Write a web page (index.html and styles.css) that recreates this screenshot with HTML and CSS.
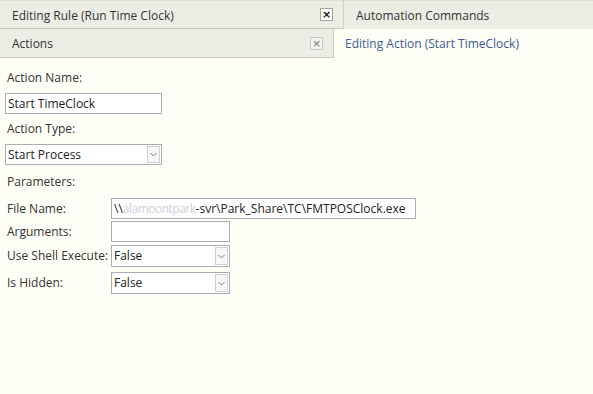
FILE: index.html
```html
<!DOCTYPE html>
<html>
<head>
<meta charset="utf-8">
<link rel="stylesheet" href="styles.css">
</head>
<body>
<div class="tabs-row1">
  <div class="tab tab-rule">
    <span class="tab-title">Editing Rule (Run Time Clock)</span>
    <span class="close close-dark">×</span>
  </div>
  <div class="tab tab-auto"><span class="tab-title">Automation Commands</span></div>
</div>
<div class="tabs-row2">
  <div class="tab tab-actions">
    <span class="tab-title">Actions</span>
    <span class="close close-light">×</span>
  </div>
  <div class="editing-title">Editing Action (Start TimeClock)</div>
</div>
<div class="form">
  <div class="label l-name">Action Name:</div>
  <div class="field w-short">Start TimeClock</div>
  <div class="label l-type">Action Type:</div>
  <div class="field select w-short">Start Process<span class="arrow"><svg width="7" height="5" viewBox="0 0 7 5"><path d="M0.5 1 L3.5 4 L6.5 1" fill="none" stroke="#7a7a7a" stroke-width="1"/></svg></span></div>
  <div class="label l-params">Parameters:</div>
  <div class="params">
    <div class="row r1"><div class="plabel">File Name:</div><div class="field w-long">\\<span class="blur">alamoontpark</span>-svr\Park_Share\TC\FMTPOSClock.exe</div></div>
    <div class="row r2"><div class="plabel">Arguments:</div><div class="field w-mid"></div></div>
    <div class="row r3"><div class="plabel">Use Shell Execute:</div><div class="field select w-mid tall">False<span class="arrow"><svg width="7" height="5" viewBox="0 0 7 5"><path d="M0.5 1 L3.5 4 L6.5 1" fill="none" stroke="#7a7a7a" stroke-width="1"/></svg></span></div></div>
    <div class="row r4"><div class="plabel">Is Hidden:</div><div class="field select w-mid tall">False<span class="arrow"><svg width="7" height="5" viewBox="0 0 7 5"><path d="M0.5 1 L3.5 4 L6.5 1" fill="none" stroke="#7a7a7a" stroke-width="1"/></svg></span></div></div>
  </div>
</div>
</body>
</html>
```
FILE: styles.css
```css
* { box-sizing: border-box; }
html, body { margin: 0; padding: 0; }
body {
  width: 593px;
  height: 394px;
  background: #fefef6;
  font-family: "Open Sans", "Noto Sans", sans-serif;
  font-size: 12px;
  color: #333333;
  overflow: hidden;
}
.tabs-row1 {
  display: flex;
  height: 29px;
  border-top: 1px solid #dcdfd6;
  background: #eceee5;
}
.tab {
  display: flex;
  align-items: center;
  position: relative;
}
.tab-title { padding-left: 12px; padding-top: 2px; line-height: 16px; }
.tab-rule {
  width: 344px;
  border-right: 1px solid #cfd1c8;
  border-bottom: 1px solid #c9cbc2;
}
.tab-auto { flex: 1; }
.close {
  position: absolute;
  top: 7px;
  width: 13px;
  height: 13px;
  display: flex;
  align-items: center;
  justify-content: center;
  font-family: "DejaVu Sans", sans-serif;
  font-size: 11px;
  line-height: 11px;
}
.close-dark {
  right: 10px;
  background: #ffffff;
  border: 1px solid #a4a69e;
  color: #111;
  font-weight: bold;
}
.close-light {
  right: 10px;
  top: 8px;
  background: #f4f5ee;
  border: 1px solid #c7c9c0;
  color: #777;
}
.tabs-row2 {
  display: flex;
  height: 29px;
}
.tab-actions {
  width: 334px;
  background: #eceee5;
  border-right: 1px solid #c9cbc2;
  border-bottom: 1px solid #c9cbc2;
}
.tab-actions .tab-title { padding-left: 12px; }
.editing-title {
  padding-left: 11px;
  padding-top: 7px;
  color: #3d5a99;
  line-height: 16px;
}
.form { padding-left: 5px; }
.label { padding-left: 2px; line-height: 16px; }
.l-name { margin-top: 12px; }
.l-type { margin-top: 7px; }
.l-params { margin-top: 9px; }
.field {
  position: relative;
  height: 21px;
  border: 1px solid #abadb3;
  background: #ffffff;
  padding-left: 2px;
  line-height: 19px;
  white-space: nowrap;
  overflow: hidden;
  color: #222;
}
.w-short { width: 157px; margin-top: 7px; }
.select .arrow {
  position: absolute;
  right: 1px;
  top: 1px;
  bottom: 1px;
  width: 13px;
  border: 1px solid #cfd0d3;
  background: #f7f7f7;
  display: flex;
  align-items: center;
  justify-content: center;
}
.params { margin-top: 8px; }
.row { display: flex; align-items: center; }
.plabel { width: 106px; padding-left: 2px; line-height: 16px; white-space: nowrap; }
.row .field { margin-top: 0; }
.r2 { margin-top: 2px; }
.r3 { margin-top: 3px; }
.r4 { margin-top: 5px; }
.w-long { width: 305px; }
.w-mid { width: 119px; }
.tall { height: 22px; line-height: 20px; }
.blur { color: #cdd0da; letter-spacing: -0.5px; }
```
